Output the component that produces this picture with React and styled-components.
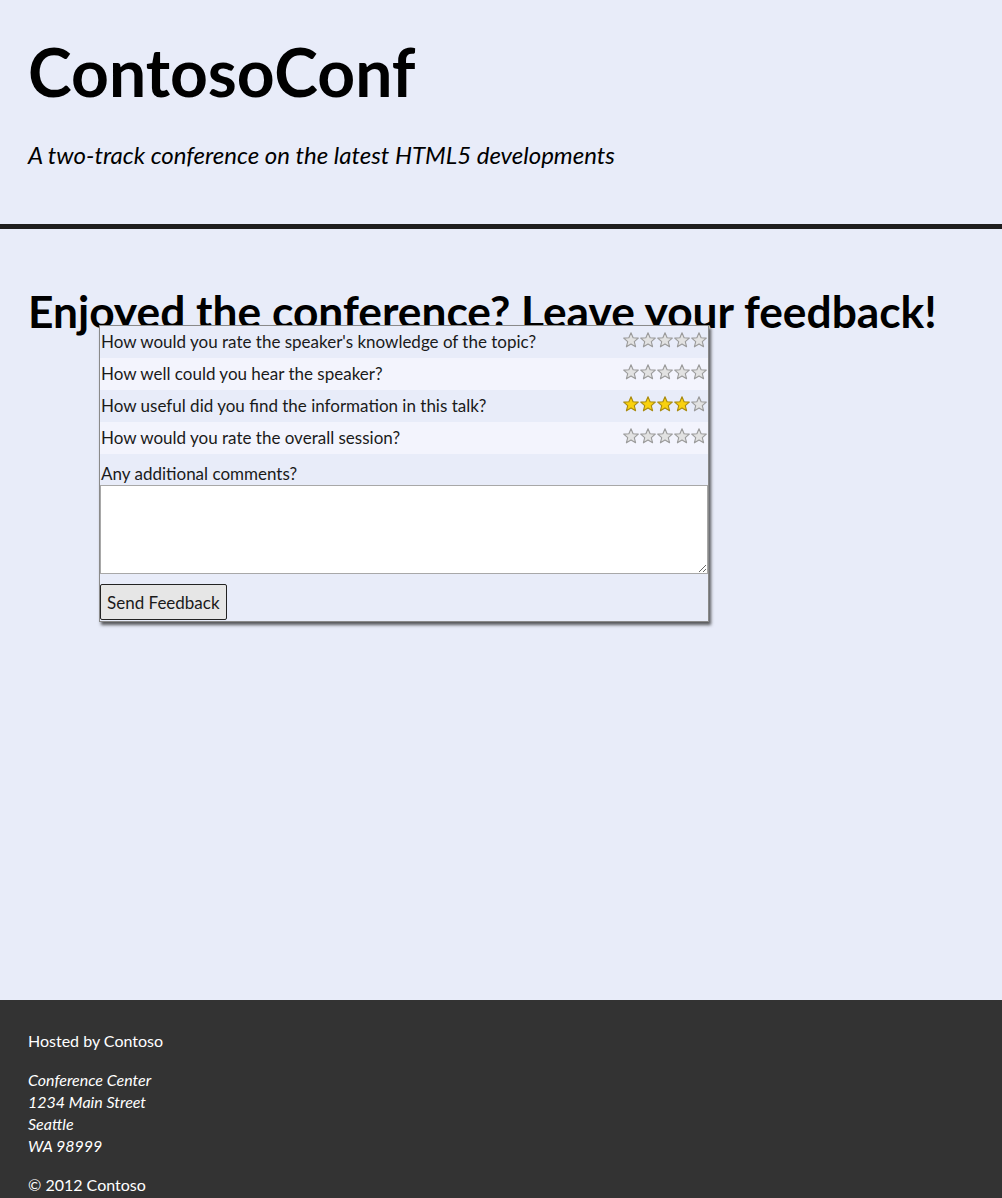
import React from 'react';
import styled, { createGlobalStyle } from 'styled-components';

const GlobalStyle = createGlobalStyle`
  html, body {
    margin: 0;
    padding: 0;
    background: #e8ecf9;
    font-family: Lato, 'Open Sans', sans-serif;
    color: #000;
  }
`;

const Page = styled.div`
  display: flex;
  flex-direction: column;
  min-height: 1198px;
`;

const Header = styled.header`
  height: 229px;
  box-sizing: border-box;
  padding: 32px 28px 0;
  border-bottom: 5px solid #1e1e1e;
`;

const Title = styled.h1`
  margin: 0;
  font-size: 66px;
  font-weight: 700;
  line-height: 80px;
`;

const Tagline = styled.p`
  margin: 28px 0 0;
  font-size: 24px;
  font-style: italic;
  line-height: 30px;
`;

const Main = styled.main`
  min-height: 771px;
  box-sizing: border-box;
  padding: 58px 28px 0;
`;

const Heading = styled.h2`
  margin: 0;
  font-size: 44.3px;
  font-weight: 700;
  line-height: 48px;
  height: 38px;
`;

const Form = styled.form`
  position: relative;
  width: 610px;
  margin-left: 71px;
  box-sizing: border-box;
  border: 1px solid #8a8a8a;
  background: #e8ecf9;
  box-shadow: 2px 3px 3px rgba(40, 40, 40, 0.75);
`;

const Row = styled.div`
  display: flex;
  align-items: center;
  justify-content: space-between;
  height: 32px;
  padding: 0 1px 0 1px;
  background: ${(p) => (p.$alt ? '#f3f4fd' : '#e8ecf9')};
`;

const Question = styled.span`
  font-size: 17px;
  color: #1a1a1a;
  margin-top: -2px;
`;

const Stars = styled.span`
  display: flex;
  gap: 1px;
  margin-top: -5px;
`;

const CommentLabel = styled.label`
  display: block;
  padding: 8px 1px 0;
  font-size: 17px;
  line-height: 23px;
  color: #1a1a1a;
`;

const Comments = styled.textarea`
  display: block;
  width: 608px;
  height: 89px;
  margin: 0;
  box-sizing: border-box;
  border: 1px solid #a8a8a8;
  background: #fff;
  resize: both;
  font-family: inherit;
`;

const Actions = styled.div`
  padding: 10px 0 1px;
`;

const SendButton = styled.button`
  height: 36px;
  padding: 0 6px;
  font-family: Lato, 'Open Sans', sans-serif;
  font-size: 17px;
  color: #1a1a1a;
  background: #e6e6e6;
  border: 1.5px solid #222;
  border-radius: 2px;
`;

const Footer = styled.footer`
  background: #333;
  color: #fff;
  padding: 30px 28px 0;
  height: 198px;
  box-sizing: border-box;
  font-size: 16px;
  line-height: 22px;
  overflow: hidden;
`;

const FooterLine = styled.p`
  margin: 0 0 17px;
`;

const Address = styled.address`
  font-style: italic;
  margin: 0 0 17px;
`;

function Star({ on }) {
  const fill = on ? '#f9d10f' : '#e2e2e2';
  const stroke = on ? '#a88a10' : '#9a9a9a';
  return (
    <svg width="16" height="16" viewBox="0 0 16 16">
      <polygon
        points="8,0.8 10.1,5.7 15.3,6.1 11.3,9.6 12.6,14.8 8,12 3.4,14.8 4.7,9.6 0.7,6.1 5.9,5.7"
        fill={fill}
        stroke={stroke}
        strokeWidth="1.1"
        strokeLinejoin="round"
      />
    </svg>
  );
}

function Rating({ value }) {
  return (
    <Stars>
      {[1, 2, 3, 4, 5].map((n) => <Star key={n} on={n <= value} />)}
    </Stars>
  );
}

const questions = [
  { text: "How would you rate the speaker's knowledge of the topic?", value: 0 },
  { text: 'How well could you hear the speaker?', value: 0 },
  { text: 'How useful did you find the information in this talk?', value: 4 },
  { text: 'How would you rate the overall session?', value: 0 },
];

export default function App() {
  return (
    <Page>
      <GlobalStyle />
      <Header>
        <Title>ContosoConf</Title>
        <Tagline>A two-track conference on the latest HTML5 developments</Tagline>
      </Header>
      <Main>
        <Heading>Enjoyed the conference? Leave your feedback!</Heading>
        <Form onSubmit={(e) => e.preventDefault()}>
          {questions.map((q, i) => (
            <Row key={q.text} $alt={i % 2 === 1}>
              <Question>{q.text}</Question>
              <Rating value={q.value} />
            </Row>
          ))}
          <CommentLabel htmlFor="comments">Any additional comments?</CommentLabel>
          <Comments id="comments" />
          <Actions>
            <SendButton type="submit">Send Feedback</SendButton>
          </Actions>
        </Form>
      </Main>
      <Footer>
        <FooterLine>Hosted by Contoso</FooterLine>
        <Address>
          Conference Center<br />
          1234 Main Street<br />
          Seattle<br />
          WA 98999
        </Address>
        <FooterLine>© 2012 Contoso</FooterLine>
      </Footer>
    </Page>
  );
}
